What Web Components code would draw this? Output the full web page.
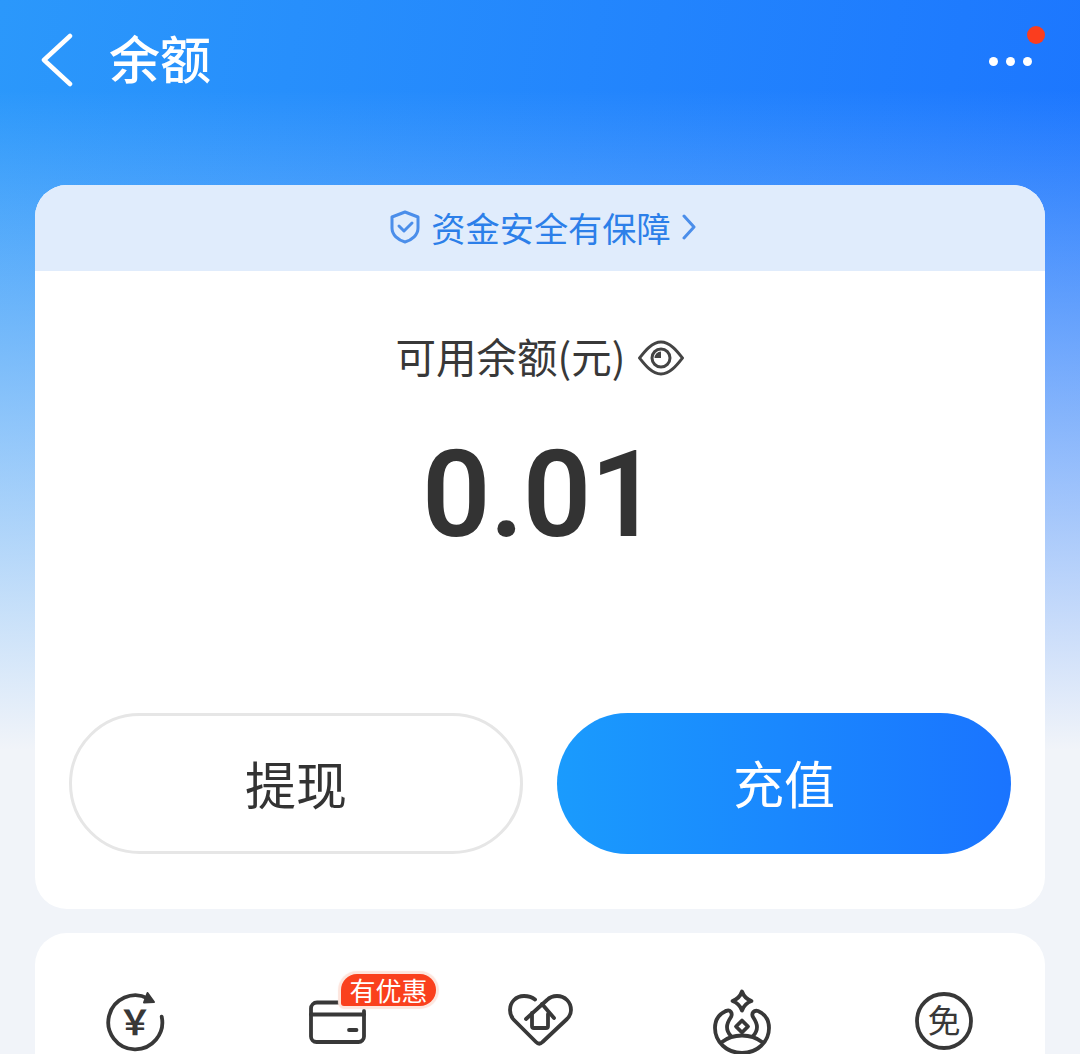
<!DOCTYPE html>
<html lang="zh-CN"><head><meta charset="utf-8"><title>余额</title>
<style>
html,body{margin:0;padding:0;height:1054px;overflow:hidden;background:#f1f4f9}
body{font-family:"Noto Sans CJK SC","Noto Sans",sans-serif}
</style></head><body>
<balance-page>
  <app-header title="余额"></app-header>
  <balance-card>
    <safety-banner>资金安全有保障</safety-banner>
    <balance-summary label="可用余额(元)" amount="0.01"></balance-summary>
    <div slot="actions" style="display:contents">
      <action-button>提现</action-button>
      <action-button primary>充值</action-button>
    </div>
  </balance-card>
  <service-card>
    <service-item icon="refund"></service-item>
    <service-item icon="wallet" badge="有优惠"></service-item>
    <service-item icon="home"></service-item>
    <service-item icon="orbit"></service-item>
    <service-item icon="free"></service-item>
  </service-card>
</balance-page>
<script>
const def=(name,css,html,init)=>customElements.define(name,class extends HTMLElement{
  connectedCallback(){ if(this.shadowRoot)return; const r=this.attachShadow({mode:'open'});
    r.innerHTML=`<style>${css}</style>`+(typeof html==='function'?html(this):html); if(init)init(this,r);} });

def('balance-page',`:host{display:flex;flex-direction:column;width:1080px;height:1054px;overflow:hidden;box-sizing:border-box;
  background:linear-gradient(to bottom,rgba(241,244,249,0) 90px,rgba(241,244,249,1) 750px),linear-gradient(100deg,#2b98fb 0%,#1a72ff 100%)}`,`<slot></slot>`);

def('app-header',`:host{display:flex;align-items:center;height:185px;box-sizing:border-box;padding:0 40px 65px 39px;color:#fff;flex:none}
 .back{width:34px;height:56px;flex:none}
 h1{margin:-6px 0 0 36px;font:500 51px/60px "Noto Sans CJK SC",sans-serif;flex:1}
 .more{position:relative;width:60px;height:60px;display:flex;justify-content:center;align-items:center;gap:8px;padding-top:2px;box-sizing:border-box}
 .more i{width:9px;height:9px;border-radius:50%;background:#fff}
 .more b{position:absolute;width:18px;height:18px;border-radius:50%;background:#fb3d1e;right:-5px;top:-4px}`,
 h=>`<svg class="back" viewBox="0 0 34 56"><path d="M31 4 5 28l26 24" fill="none" stroke="#fff" stroke-width="4.500" stroke-linecap="round" stroke-linejoin="round"/></svg>
 <h1>${h.getAttribute('title')}</h1><div class="more"><i></i><i></i><i></i><b></b></div>`);

def('balance-card',`:host{display:flex;flex-direction:column;margin:0 35px;height:724px;flex:none;background:#fff;border-radius:32px;overflow:hidden}
 .actions{display:flex;gap:34px;padding:0 34px;margin-top:auto;margin-bottom:55px}`,
 `<slot></slot><div class="actions"><slot name="actions"></slot></div>`);

def('safety-banner',`:host{display:flex;align-items:center;justify-content:center;height:86px;padding:0 0 2px 6px;box-sizing:border-box;flex:none;background:#e0ecfc;color:#2c7fe9;font:400 34.200px/1 "Noto Sans CJK SC",sans-serif}
 svg{flex:none} .s{width:32px;height:34px;margin-right:10px} .c{width:16px;height:26px;margin-left:10px}`,
 `<svg class="s" viewBox="0 0 32 34" fill="none" stroke="#4b8eea" stroke-width="3" stroke-linejoin="round" stroke-linecap="round"><path d="M16 2 29 7v11c0 7-6 12-13 14C9 30 3 25 3 18V7z"/><path d="m10 16 5 5 8-8"/></svg>
 <slot></slot>
 <svg class="c" viewBox="0 0 16 26" fill="none" stroke="#4b8eea" stroke-width="3" stroke-linecap="round" stroke-linejoin="round"><path d="m3 2 10 11L3 24"/></svg>`);

def('balance-summary',`:host{display:flex;flex-direction:column;align-items:center;flex:none;padding-top:57px;color:#383838}
 .l{display:flex;align-items:center;height:56px;font:400 40.500px/56px "Noto Sans CJK SC",sans-serif;padding-left:1px}
 .l svg{width:48px;height:38px;margin:3px 0 0 12px;flex:none}
 .a{font:600 120px/150px Roboto,sans-serif;margin-top:36px;letter-spacing:-1px;color:#333}`,
 h=>`<div class="l"><span>${h.getAttribute('label')}</span><svg viewBox="0 0 48 38" fill="none" stroke="#444" stroke-width="3" stroke-linejoin="round"><path d="M2.500 19C8 12 15 3 24 3s16 9 21.500 16C40 26 33 35 24 35S8 26 2.500 19z"/><circle cx="24" cy="19" r="9"/><path d="M24 19v-6.500a6.500 6.500 0 0 0-6.500 6.500z" fill="#444" stroke="none"/></svg></div>
 <div class="a">${h.getAttribute('amount')}</div>`);

def('action-button',`:host{flex:1 1 50%;min-width:0;display:flex;align-items:center;justify-content:center;height:141px;box-sizing:border-box;border-radius:71px;border:3px solid #e6e6e6;background:#fff;color:#333;font:400 51px/1 "Noto Sans CJK SC",sans-serif;padding-bottom:1px}
 :host([primary]){border:0;color:#fff;background:linear-gradient(90deg,#1a9bfd,#1a74ff);padding-bottom:3px}`,`<slot></slot>`);

def('service-card',`:host{display:grid;grid-template-columns:repeat(5,1fr);margin:24px 35px 0;padding-top:56px;height:200px;flex:none;box-sizing:border-box;background:#fff;border-radius:32px 32px 0 0}`,`<slot></slot>`);

const ICONS={
 refund:`<path d="M44 9.500A27 27 0 1 0 57.700 27.700"/><path d="M43.500 4 50 13 40 13.500z" fill="#383838" stroke="#383838" stroke-width="2" stroke-linejoin="round"/><text x="31" y="46" text-anchor="middle" font-size="34" font-weight="700" fill="#383838" font-family="'Noto Sans CJK SC',sans-serif" stroke="none">￥</text>`,
 wallet:`<path d="M36 13.500H11a6 6 0 0 0-6 6v28a5.500 5.500 0 0 0 5.500 5.500H52.500a5.500 5.500 0 0 0 5.500-5.500V22"/><path d="M5 25.500h53"/><path d="M43 41h7.500"/>`,
 home:`<path d="M27 10.500C24 8 20 7 16 7 8 7 2 13 2 21c0 4 2 8 4 10l22 22c2 2 4.500 2 6.500 0L59 30c3-3 4-6 4-9 0-8-6-14-14-14-4 0-7 1-10 4L18 30"/><path d="M34 15 46 29"/><path d="M24 24V37a2 2 0 0 0 2 2H38a2 2 0 0 0 2-2V25"/>`,
 orbit:`<path d="M32 2.500Q34.500 9.500 41.500 12 34.500 14.500 32 21.500 29.500 14.500 22.500 12 29.500 9.500 32 2.500z"/><path d="M16 22C9 25 5 31 5 39c0 14 12 25 27 25s27-11 27-25c0-8-4-14-11-17-4-1-7 2-5 6 2 3 4 6 4 10 0 4-2 7-4 9"/><path d="M16 22c4-2 7 2 5 6-2 3-4 6-4 10 0 4 2 7 4 9"/><path d="M12 53c5-4 12-6.500 20-6.500s15 2.500 20 6.500"/><path d="M32 31.500 38 37.500 32 43.500 26 37.500z"/>`,
 free:`<circle cx="32" cy="32" r="27"/><text x="32" y="44" text-anchor="middle" font-size="33" fill="#383838" stroke="none" font-family="'Noto Sans CJK SC',sans-serif">免</text>`
};
def('service-item',`:host{display:flex;justify-content:center;align-items:flex-start}
 .w{position:relative;width:64px;height:64px}
 svg{display:block;width:64px;height:64px;overflow:visible}
 .b{position:absolute;left:35px;top:-15px;height:32px;width:95px;box-sizing:border-box;display:flex;align-items:center;justify-content:center;color:#fff;background:#fa401d;border-radius:16px 16px 16px 3px;font:400 26px/1 "Noto Sans CJK SC",sans-serif;box-shadow:0 0 1px 3px #fde5dd}`,
 h=>`<div class="w"><svg viewBox="0 0 64 64" fill="none" stroke="#383838" stroke-width="3.800" stroke-linecap="round" stroke-linejoin="round">${ICONS[h.getAttribute('icon')]}</svg>${h.getAttribute('badge')?`<span class="b">${h.getAttribute('badge')}</span>`:''}</div>`);
</script>
</body></html>
